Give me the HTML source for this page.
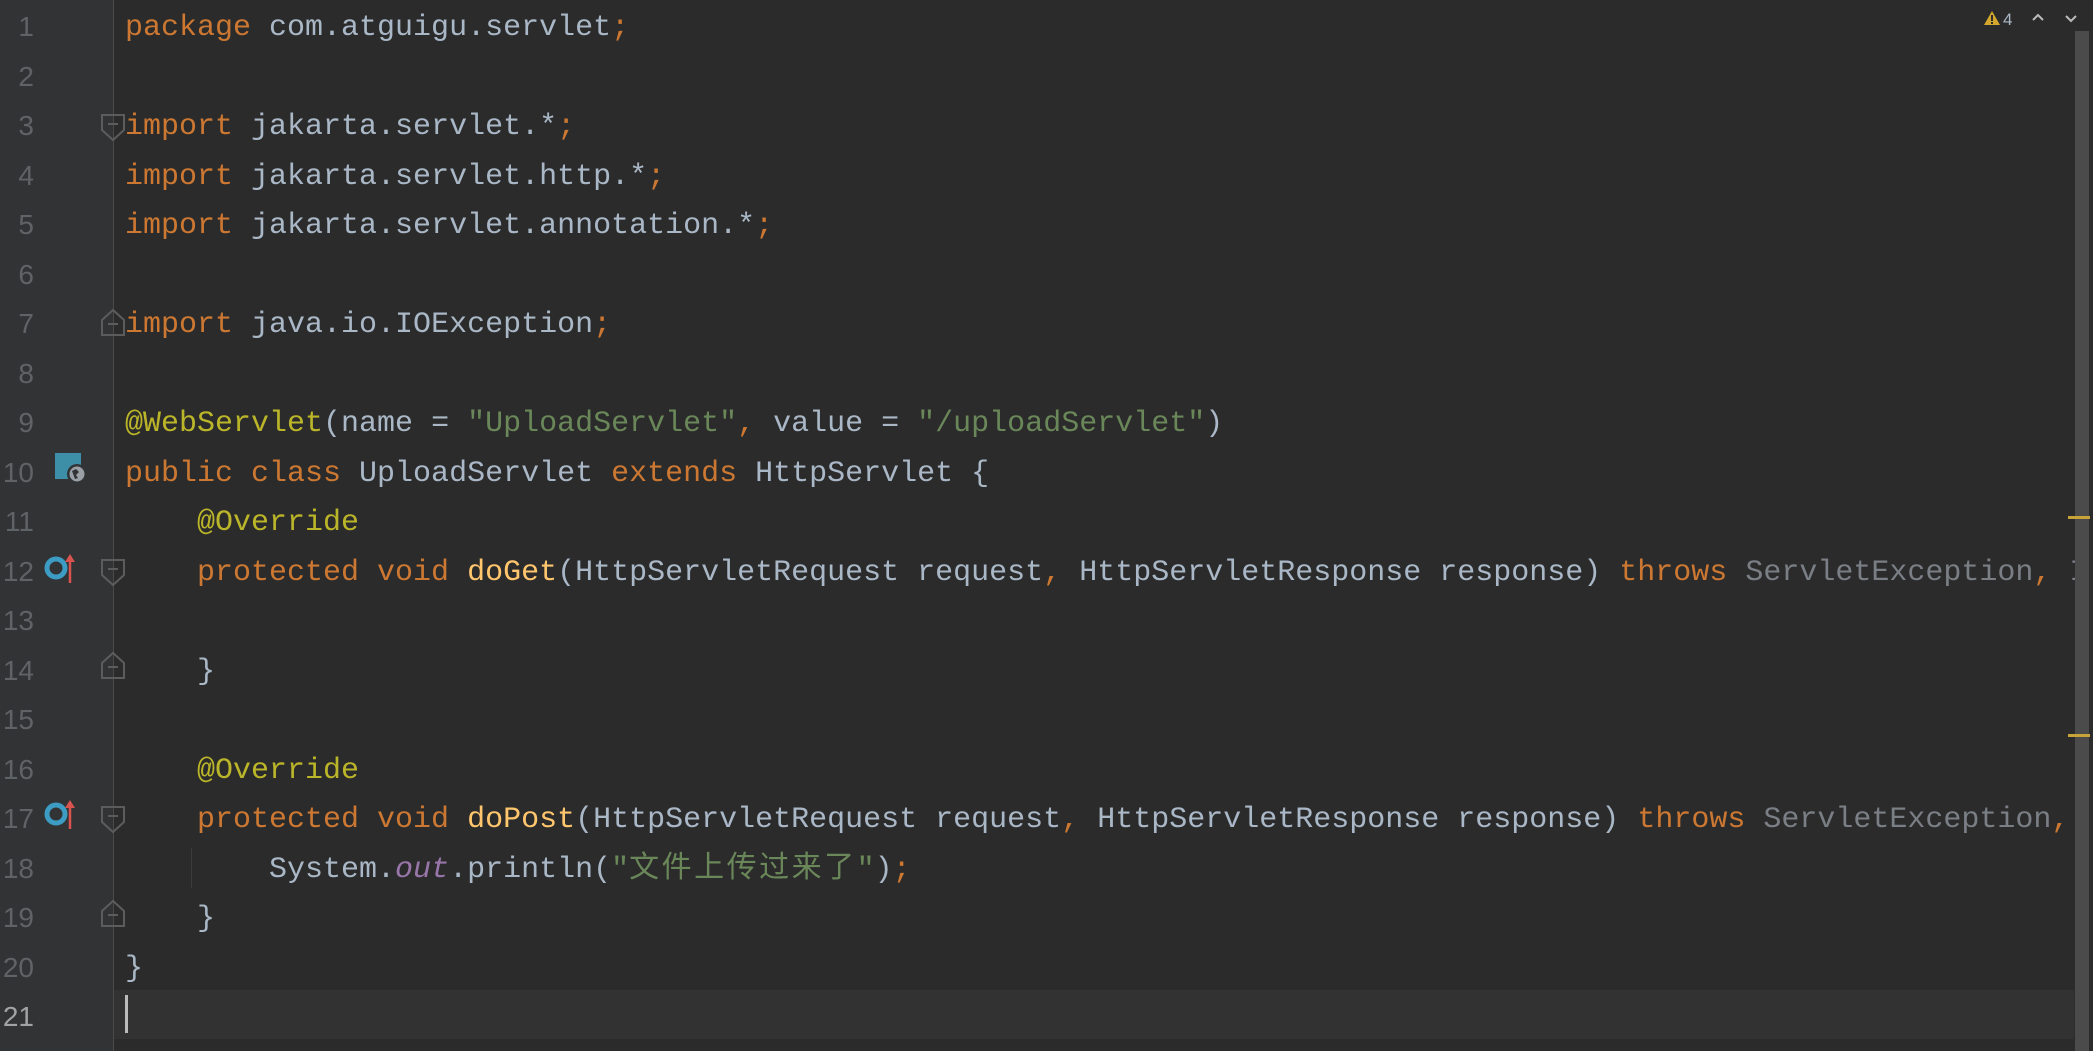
<!DOCTYPE html>
<html><head><meta charset="utf-8"><style>
html,body{margin:0;padding:0;width:2093px;height:1051px;overflow:hidden;background:#2b2b2b}
.g{position:absolute;left:0;top:0;width:113px;height:1051px;background:#313335}
.sep{position:absolute;left:113px;top:0;width:1px;height:1051px;background:#4a4a4a}
.cur{position:absolute;left:114px;top:990px;width:1960px;height:49px;background:#323232}
.wrap{position:absolute;left:0;top:0;width:2093px;height:1051px;overflow:hidden}
.l{position:absolute;left:125px;margin-top:4px;height:49.5px;line-height:49.5px;font-family:"Liberation Mono","Noto Sans CJK SC",monospace;font-size:30px;color:#a9b7c6;white-space:pre}
.n{position:absolute;left:0;margin-top:2px;width:34px;text-align:right;height:49.5px;line-height:49.5px;font-family:"Liberation Sans",sans-serif;font-size:28px;color:#606366}
.k{color:#cc7832}.s{color:#6a8759}.a{color:#bbb529}.m{color:#ffc66d}.o{color:#9876aa;font-style:italic}.x{color:#7a7e85}
.cj{letter-spacing:2.5px}
.sb{position:absolute;left:2075px;top:31px;width:14px;height:1020px;background:#4b4b4b}
.ym{position:absolute;left:2068px;width:22px;height:3px;background:#c7a33a}
</style></head><body>
<div class="g"></div><div class="sep"></div><div class="cur"></div>
<div class="n" style="top:0">1</div><div class="n" style="top:49.5px">2</div><div class="n" style="top:99px">3</div><div class="n" style="top:148.5px">4</div><div class="n" style="top:198px">5</div><div class="n" style="top:247.5px">6</div><div class="n" style="top:297px">7</div><div class="n" style="top:346.5px">8</div><div class="n" style="top:396px">9</div><div class="n" style="top:445.5px">10</div><div class="n" style="top:495px">11</div><div class="n" style="top:544.5px">12</div><div class="n" style="top:594px">13</div><div class="n" style="top:643.5px">14</div><div class="n" style="top:693px">15</div><div class="n" style="top:742.5px">16</div><div class="n" style="top:792px">17</div><div class="n" style="top:841.5px">18</div><div class="n" style="top:891px">19</div><div class="n" style="top:940.5px">20</div><div class="n" style="top:990px;color:#a4a3a3">21</div>

<div class="wrap">
<div class="l" style="top:0"><span class="k">package</span> com.atguigu.servlet<span class="k">;</span></div>
<div class="l" style="top:99px"><span class="k">import</span> jakarta.servlet.*<span class="k">;</span></div>
<div class="l" style="top:148.5px"><span class="k">import</span> jakarta.servlet.http.*<span class="k">;</span></div>
<div class="l" style="top:198px"><span class="k">import</span> jakarta.servlet.annotation.*<span class="k">;</span></div>
<div class="l" style="top:297px"><span class="k">import</span> java.io.IOException<span class="k">;</span></div>
<div class="l" style="top:396px"><span class="a">@WebServlet</span>(name = <span class="s">"UploadServlet"</span><span class="k">,</span> value = <span class="s">"/uploadServlet"</span>)</div>
<div class="l" style="top:445.5px"><span class="k">public class</span> UploadServlet <span class="k">extends</span> HttpServlet {</div>
<div class="l" style="top:495px">    <span class="a">@Override</span></div>
<div class="l" style="top:544.5px">    <span class="k">protected void</span> <span class="m">doGet</span>(HttpServletRequest request<span class="k">,</span> HttpServletResponse response) <span class="k">throws</span> <span class="x">ServletException</span><span class="k">,</span> <span class="x">I</span></div>
<div class="l" style="top:643.5px">    }</div>
<div class="l" style="top:742.5px">    <span class="a">@Override</span></div>
<div class="l" style="top:792px">    <span class="k">protected void</span> <span class="m">doPost</span>(HttpServletRequest request<span class="k">,</span> HttpServletResponse response) <span class="k">throws</span> <span class="x">ServletException</span><span class="k">,</span></div>
<div class="l" style="top:841.5px">        System.<span class="o">out</span>.println(<span class="s">"<span class="cj">文件上传过来了</span>"</span>)<span class="k">;</span></div>
<div class="l" style="top:891px">    }</div>
<div class="l" style="top:940.5px">}</div>
</div>
<div style="position:absolute;left:125px;top:995px;width:3px;height:38px;background:#bbb"></div>
<div style="position:absolute;left:191px;top:848px;width:1px;height:40px;background:#3b3b3b"></div>

<svg style="position:absolute;left:0;top:0" width="140" height="1051">
<g fill="none" stroke="#5c5c5c" stroke-width="2">
<path d="M102 115h22v15l-11 10l-11-10z"/><path d="M108 124h10"/>
<path d="M102 335h22v-15l-11-10l-11 10z"/><path d="M108 324h10"/>
<path d="M102 560h22v15l-11 10l-11-10z"/><path d="M108 569h10"/>
<path d="M102 678h22v-15l-11-10l-11 10z"/><path d="M108 667h10"/>
<path d="M102 807h22v15l-11 10l-11-10z"/><path d="M108 816h10"/>
<path d="M102 926h22v-15l-11-10l-11 10z"/><path d="M108 915h10"/>
</g>
<rect x="55" y="453" width="26" height="26" fill="#3d8fa8"/>
<circle cx="77" cy="474" r="10" fill="#313335"/><circle cx="77" cy="474" r="7.5" fill="#9aa0a6"/>
<path d="M72 471l4-2l3 3l-3 3l2 3l-3 1z" fill="#313335"/>
<circle cx="56" cy="568" r="9" fill="none" stroke="#3d9cc4" stroke-width="5"/>
<circle cx="56" cy="814" r="9" fill="none" stroke="#3d9cc4" stroke-width="5"/>
<g stroke="#d9534f" stroke-width="2.5" fill="#d9534f">
<path d="M70 583V560"/><path d="M65 562l5-8l5 8z" stroke="none"/>
<path d="M70 829V806"/><path d="M65 808l5-8l5 8z" stroke="none"/>
</g>
</svg>

<div class="sb"></div>
<div class="ym" style="top:516px"></div><div class="ym" style="top:734px"></div>
<svg style="position:absolute;left:1980px;top:6px" width="110" height="24">
<path d="M4 19L12 5L20 19z" fill="#d4a72c"/><rect x="11" y="9" width="2" height="6" fill="#2b2b2b"/><rect x="11" y="16" width="2" height="2" fill="#2b2b2b"/>
<text x="23" y="19" font-family="Liberation Sans,sans-serif" font-size="17" fill="#a9b7c6">4</text>
<path d="M53 14l5-5l5 5" fill="none" stroke="#bbb" stroke-width="2"/>
<path d="M86 10l5 5l5-5" fill="none" stroke="#bbb" stroke-width="2"/>
</svg>
</body></html>
